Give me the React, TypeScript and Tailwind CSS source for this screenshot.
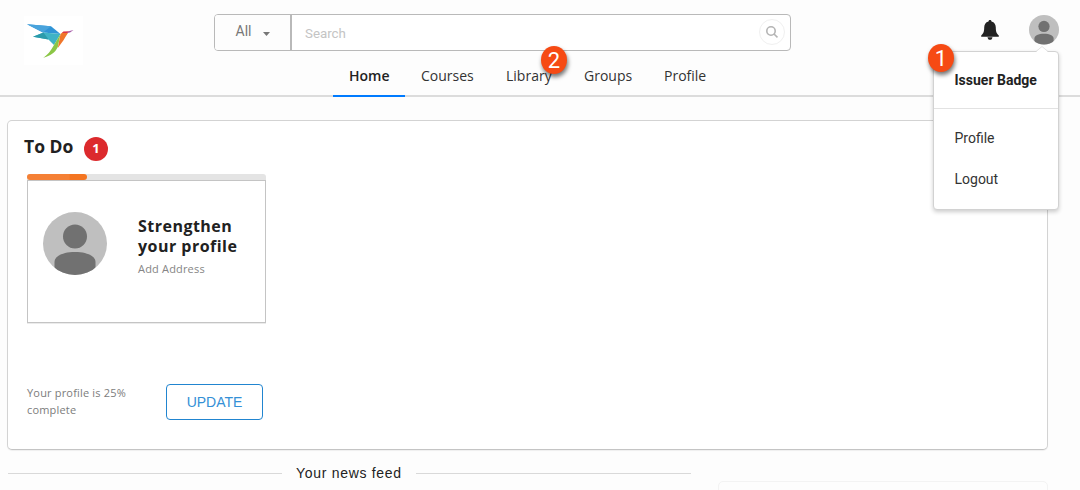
import React from "react";

function Bird() {
  return (
    <svg width="59" height="49" viewBox="24 16 59 49">
      <path d="M27 24.3 51 26.2 60.5 34 43 32.6Z" fill="#3094d6" />
      <path d="M27 24.3 51 26.2 43 32.6Z" fill="#49a3dc" />
      <path d="M33 36.700 43.500 32.600 60.500 34 54 45 48.500 39.600Z" fill="#3fb3c6" />
      <path d="M33 36.700 43.500 32.600 48.500 39.600Z" fill="#2b9bab" />
      <path d="M60.500 34 57.800 47 C55 53 50.500 55.500 43.300 57.800 C50 53 51.500 49 54 45Z" fill="#8bc646" />
      <path d="M60.500 34 63.300 31.700 68.500 32.600 C65.500 36 64.500 40 57.800 48Z" fill="#f0762b" />
      <path d="M62 33 63.600 31.500 69 31.200 67.500 33Z" fill="#df3547" />
      <path d="M68.500 31.300 73.500 30 70 32.500 67 33Z" fill="#a65ba8" />
    </svg>
  );
}

function Avatar({ size }: { size: number }) {
  return (
    <svg width={size} height={size} viewBox="0 0 64 64" className="block shrink-0">
      <clipPath id={`avatar-${size}`}>
        <ellipse cx="32" cy="31.500" rx="32" ry="31.500" />
      </clipPath>
      <g clipPath={`url(#avatar-${size})`}>
        <rect width="64" height="64" fill="#bfbfbf" />
        <circle cx="32" cy="24.400" r="12" fill="#717171" />
        <path d="M11.500 64V50C11.500 44 20 40 32 40S52.500 44 52.500 50V64Z" fill="#717171" />
      </g>
    </svg>
  );
}

function Marker({ children, className }: { children: React.ReactNode; className: string }) {
  return (
    <div
      className={`absolute z-20 flex h-[28px] w-[26px] items-center justify-center rounded-[50%] bg-[#f64a14] pt-[2px] font-['Roboto',sans-serif] text-[22px] leading-none text-white shadow-[1px_3px_4px_rgba(0,0,0,0.55)] ${className}`}
    >
      {children}
    </div>
  );
}

function UserMenu() {
  return (
    <div className="absolute top-[51px] left-[933px] z-10 h-[159px] w-[126px] rounded-[4px] border border-[#d2d2d2] bg-white font-['Roboto',sans-serif] text-[14px] leading-[20px] text-[#333] shadow-[0_2px_4px_rgba(0,0,0,0.2)]">
      <svg width="12" height="7" viewBox="0 0 12 7" className="absolute -top-[6px] left-[102px]">
        <path d="M0 6 6 0.500 12 6V7H0Z" fill="#fff" />
        <path d="M0 5.500 6 0.500 12 5.500" fill="none" stroke="#dcdcdc" strokeWidth="0.8" />
      </svg>
      <div className="h-[57px] border-b border-[#e2e2e2] pt-[18px] pl-[20.5px] font-bold text-[#222]">Issuer Badge</div>
      <div className="pt-[19px] pl-[20.5px]">Profile</div>
      <div className="pt-[21px] pl-[20.5px]">Logout</div>
    </div>
  );
}

function Header() {
  return (
    <header className="h-[97px] border-b-2 border-[#dcdcdc]">
      <div className="flex h-[65px] items-start">
        <div className="mt-[16px] ml-[24px] h-[49px] w-[59px] bg-white">
          <Bird />
        </div>
        <div className="mt-[14px] ml-[131px] flex h-[37px] w-[577px] rounded-[4px] border border-[#b9b9b9] bg-white">
          <div className="flex w-[77px] rounded-l-[3px] border-r-2 border-[#b9b9b9] bg-[#fdfdfd] pl-[20.5px] font-['Roboto',sans-serif] text-[14px] leading-[32px] text-[#777]">
            <span className="w-[27.5px]">All</span>
            <svg width="8" height="4" viewBox="0 0 8 4" className="mt-[17px]">
              <path d="M0 0H7L3.500 4Z" fill="#777" />
            </svg>
          </div>
          <div className="flex-1 pl-[13px] font-['Roboto',sans-serif] text-[13.333px] leading-[37px] text-[#c4c4c4]">Search</div>
          <div className="mt-[4px] mr-[5px] flex h-[26px] w-[26px] items-center justify-center rounded-full border border-[#f0f0f0]">
            <svg width="12" height="12" viewBox="0 0 12 12" fill="none" stroke="#b4b4b4" strokeWidth="1.600">
              <circle cx="5" cy="5" r="4.200" />
              <path d="M8 8 11.500 11.300" />
            </svg>
          </div>
        </div>
        <svg width="18" height="20" viewBox="0 0 18 20" className="mt-[20px] ml-[189.5px]" fill="#222">
          <path d="M9 0C8 0 7.500.6 7.500 1.500 4.500 2.300 3.300 4.500 3.200 7.500 3.200 12 2.300 13.500.2 15.500V16.800H17.800V15.500C15.700 13.500 14.800 12 14.800 7.500 14.700 4.500 13.500 2.300 10.500 1.500 10.500.6 10 0 9 0Z" />
          <path d="M6.500 17.200H11.500C11.300 18.800 10.300 19.800 9 19.800S6.700 18.800 6.500 17.200Z" />
        </svg>
        <div className="mt-[15px] ml-[30.5px]">
          <Avatar size={30} />
        </div>
      </div>
      <nav className="ml-[333px] flex h-[32px] font-['Open_Sans',sans-serif] text-[14px] leading-[21px] text-[#333]">
        <a className="w-[72px] border-b-2 border-[#007bff] pl-[16px] font-semibold text-[#222]">Home</a>
        <a className="w-[85px] pl-[16px]">Courses</a>
        <a className="w-[78px] pl-[16px]">Library</a>
        <a className="w-[80px] pl-[16px]">Groups</a>
        <a className="pl-[16px]">Profile</a>
      </nav>
    </header>
  );
}

function TodoPanel() {
  return (
    <section className="mt-[23px] ml-[7px] h-[330px] w-[1041px] rounded-[5px] border border-[#d3d3d3] border-b-[#c4c4c4] bg-white font-['Open_Sans',sans-serif] shadow-[0_1px_1px_rgba(0,0,0,0.06)]">
      <div className="flex h-[53px] pl-[16px]">
        <h2 className="w-[60px] pt-[13px] text-[17.5px] leading-[25px] font-bold text-[#212121]">To Do</h2>
        <span className="mt-[16px] h-[24px] w-[24px] rounded-full bg-[#dc2a2d] text-center text-[13px] leading-[23px] font-bold text-white">1</span>
      </div>
      <div className="ml-[19px] w-[239px]">
        <div className="h-[6px] rounded-t-[3px] bg-[#e4e4e4]">
          <div className="h-[6px] w-[60px] rounded-[3px] bg-linear-to-r from-[#f58035] from-70% to-[#f47521] to-72%" />
        </div>
        <div className="flex h-[143px] border border-[#c4c4c4] pl-[15px] shadow-[0_1px_0_rgba(0,0,0,0.08)]">
          <div className="mt-[31px] w-[95px]">
            <Avatar size={64} />
          </div>
          <div className="pt-[35px]">
            <h3 className="text-[16px] leading-[20px] font-bold tracking-[0.480px] text-[#212121]">
              Strengthen
              <br />
              your profile
            </h3>
            <p className="mt-[4px] text-[11px] leading-[18px] tracking-[0.180px] text-[#858585]">Add Address</p>
          </div>
        </div>
        <div className="mt-[61px] flex">
          <p className="w-[139px] text-[11px] leading-[17px] tracking-[0.180px] text-[#7c7c7c]">
            Your profile is 25%
            <br />
            complete
          </p>
          <button className="h-[36px] w-[97px] rounded-[4px] border border-[#2185d0] font-['Liberation_Sans',sans-serif] text-[14px] text-[#3490d6]">UPDATE</button>
        </div>
      </div>
    </section>
  );
}

export default function App() {
  return (
    <div className="relative h-[490px] w-[1080px] overflow-hidden bg-[#fdfdfd]">
      <Header />
      <TodoPanel />
      <div className="flex items-start">
        <div className="ml-[8px] flex h-[40px] w-[683px] items-start">
          <div className="mt-[23px] h-px w-[274px] bg-[#d9d9d9]" />
          <div className="mt-[13px] w-[134px] pl-[14px] font-['Liberation_Sans',sans-serif] text-[14px] leading-[20px] tracking-[0.700px] whitespace-nowrap text-[#222]">Your news feed</div>
          <div className="mt-[23px] h-px flex-1 bg-[#d9d9d9]" />
        </div>
        <div className="mt-[31px] ml-[27px] h-[40px] w-[330px] rounded-[5px] border border-[#f3f3f3]" />
      </div>
      <UserMenu />
      <Marker className="top-[46px] left-[541px]">2</Marker>
      <Marker className="top-[44px] left-[928px]">1</Marker>
    </div>
  );
}
